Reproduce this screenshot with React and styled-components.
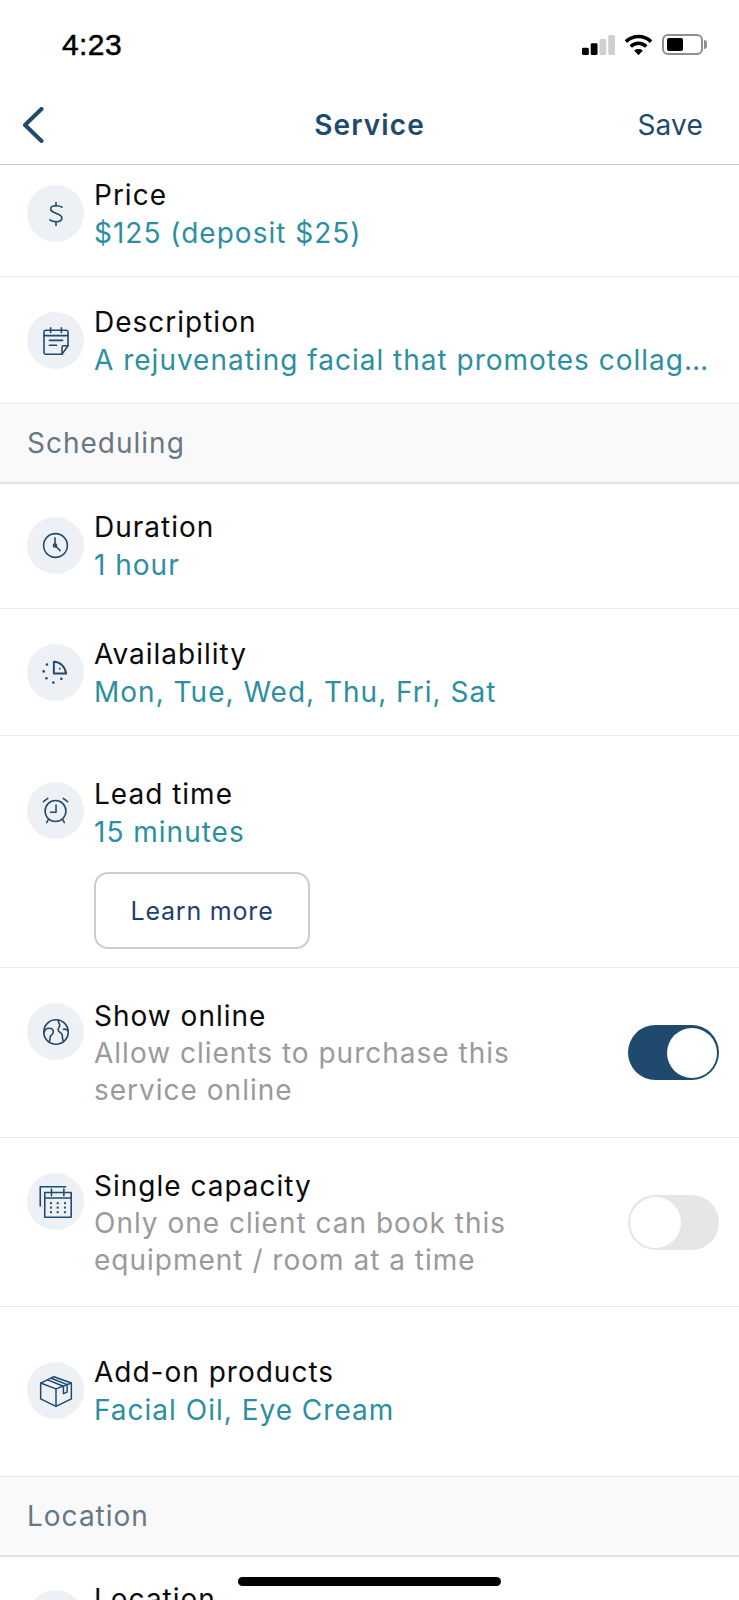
import styled, { createGlobalStyle } from "styled-components";

const GlobalStyle = createGlobalStyle`
  html, body {
    margin: 0;
    padding: 0;
    background: #fff;
  }
  * {
    box-sizing: border-box;
  }
`;

const iconProps = {
  width: 30,
  height: 30,
  viewBox: "0 0 30 30",
  fill: "none",
  stroke: "#1f4a6e",
  strokeWidth: 1.4,
  strokeLinecap: "round",
  strokeLinejoin: "round",
};

const DollarIcon = () => (
  <svg {...iconProps} strokeWidth="1.600">
    <path d="M21 8.200c-1.300-1-3.300-1.500-6-1.500-3.200 0-5.300 1.200-5.300 3.200 0 1.500 1.200 2.500 2.900 3.300l5.200 2.300c1.900.9 3.100 2 3.100 3.600 0 2.300-2.300 3.600-5.500 3.600-2.900 0-5-.6-6.400-1.900" />
    <path d="M15 3.500v3.200M15 22.700v3.800" />
  </svg>
);

const NoteIcon = () => (
  <svg {...iconProps} width={36} height={36} strokeWidth="1.300">
    <path d="M20 26H6.500A1.500 1.500 0 0 1 5 24.500V7.500A1.500 1.500 0 0 1 6.500 6h17A1.500 1.500 0 0 1 25 7.500V19z" />
    <path d="M20 26v-5.500a1.500 1.500 0 0 1 1.500-1.500H25" />
    <path d="M5 10.500h20M10.500 4v4M19.500 4v4M9.500 14.500h11M9.500 18.500h6" />
  </svg>
);

const ClockIcon = () => (
  <svg {...iconProps} width={31} height={31} strokeWidth="1.500">
    <circle cx="15" cy="15" r="11.500" />
    <path d="M14.500 7.500V15l5 5" />
    <circle cx="14.500" cy="15" r="1.500" />
  </svg>
);

const AvailabilityIcon = () => (
  <svg {...iconProps} width={32} height={32}>
    <path d="M13 4.500c6 0 10.500 4.500 11.500 11H13z" strokeWidth="1.800" />
    <circle cx="18.500" cy="11" r=".9" fill="#1f4a6e" stroke="none" />
    <g fill="#1f4a6e" stroke="none">
      <circle cx="6.500" cy="7" r="1.200" />
      <circle cx="3.500" cy="13.500" r="1.200" />
      <circle cx="6" cy="20" r="1.200" />
      <circle cx="12.500" cy="24" r="1.200" />
      <circle cx="20" cy="20.500" r="1.200" />
    </g>
  </svg>
);

const AlarmIcon = () => (
  <svg {...iconProps} width={33} height={33} strokeWidth="1.400">
    <circle cx="15" cy="15.500" r="9.500" />
    <path d="M15.500 10v6.500h-5M4 7 8 4M26 7l-4-3M8.500 23 7 26M21.500 23l1.500 3" />
  </svg>
);

const GlobeIcon = () => (
  <svg {...iconProps} width={32} height={32} strokeWidth="1.500">
    <circle cx="15" cy="15" r="11.500" />
    <path d="M3.500 16c1-3 2.800-4.500 5-4.500 2.500 0 4 1.500 4 3.500 0 1.800-1.500 2.500-2.500 3.500-.8.800-.3 2.500-1 5" />
    <path d="M17 4c.5 2.500 1.500 3.500 1.500 5 0 1.500-1.500 2-1.500 4 0 2 2.500 2.300 3.500 4 .8 1.500.3 3.500 1 6" />
    <path d="M26.500 14c-1.500-1.500-3-2-4.500-1.500" />
  </svg>
);

const CalendarIcon = () => (
  <svg {...iconProps} width={36} height={36} viewBox="0 0 32 32">
    <path d="M2 20V2.500h23" strokeLinecap="butt" />
    <path d="M6 7.500h23.500v22H6z" />
    <path d="M6 12.500h23.500M12 4.500v6M23 4.500v6" />
    <g fill="#1f4a6e" stroke="none">
      <circle cx="11.500" cy="17" r="1" />
      <circle cx="17.500" cy="17" r="1" />
      <circle cx="24" cy="17" r="1" />
      <circle cx="11.500" cy="21" r="1" />
      <circle cx="17.500" cy="21" r="1" />
      <circle cx="24" cy="21" r="1" />
      <circle cx="11.500" cy="25" r="1" />
      <circle cx="17.500" cy="25" r="1" />
      <circle cx="24" cy="25" r="1" />
    </g>
  </svg>
);

const BoxIcon = () => (
  <svg {...iconProps} width={36} height={36} viewBox="0 0 34 34">
    <path d="M17 15 2.500 9.500 15 3.500l16.500 6z" />
    <path d="M2.500 9.500v15L17 31.500V15M31.500 9.500v15L17 31.500" />
    <path d="M9 6.500 24 12.500v7l3.500-1.500v-7L12.500 5" />
  </svg>
);

const rows = {
  price: { title: "Price", value: "$125 (deposit $25)", icon: <DollarIcon /> },
  description: {
    title: "Description",
    value: "A rejuvenating facial that promotes collagen production and glow",
    icon: <NoteIcon />,
  },
  duration: { title: "Duration", value: "1 hour", icon: <ClockIcon /> },
  availability: {
    title: "Availability",
    value: "Mon, Tue, Wed, Thu, Fri, Sat",
    icon: <AvailabilityIcon />,
  },
  addons: {
    title: "Add-on products",
    value: "Facial Oil, Eye Cream",
    icon: <BoxIcon />,
  },
};

function InfoRow({ item, top, bottom }) {
  return (
    <Row $top={top} $bottom={bottom}>
      <IconCircle>{item.icon}</IconCircle>
      <RowText $shift={1}>
        <RowTitle>{item.title}</RowTitle>
        <RowValue>{item.value}</RowValue>
      </RowText>
    </Row>
  );
}

export default function App() {
  return (
    <Screen>
      <GlobalStyle />
      <StatusBar>
        <Clock>4:23</Clock>
        <StatusIcons>
          <svg width="33" height="20" viewBox="0 0 34 22" preserveAspectRatio="none">
            <rect x="0" y="14" width="7" height="8" rx="1.500" fill="#000" />
            <rect x="9" y="9" width="7" height="13" rx="1.500" fill="#000" />
            <rect x="18" y="4.500" width="7" height="17.500" rx="1.500" fill="#cfcfcf" />
            <rect x="27" y="0" width="7" height="22" rx="1.500" fill="#cfcfcf" />
          </svg>
          <svg width="29" height="22" viewBox="0 0 30 22" fill="none" stroke="#000" strokeWidth="3.600">
            <path d="M2 7.500c7.500-7 18.500-7 26 0" />
            <path d="M7 12.500c4.800-4.400 11.200-4.400 16 0" />
            <path d="M15 21.500l-4.500-4.800c2.700-2 6.300-2 9 0z" fill="#000" stroke="none" />
          </svg>
          <Battery>
            <BatteryFill />
          </Battery>
        </StatusIcons>
      </StatusBar>

      <NavBar>
        <BackButton>
          <svg width="22" height="36" viewBox="0 0 22 36" fill="none" stroke="#1f4a6e" strokeWidth="4" strokeLinecap="round" strokeLinejoin="round">
            <path d="M19.500 2 3 18l16.500 16" />
          </svg>
        </BackButton>
        <NavTitle>Service</NavTitle>
        <SaveButton>Save</SaveButton>
      </NavBar>

      <InfoRow item={rows.price} top={10} />
      <InfoRow item={rows.description} />

      <SectionHeader>Scheduling</SectionHeader>
      <InfoRow item={rows.duration} top={23} />
      <InfoRow item={rows.availability} />

      <Row $top={36} $bottom={21}>
        <IconCircle>
          <AlarmIcon />
        </IconCircle>
        <RowText $shift={3}>
          <RowTitle>Lead time</RowTitle>
          <RowValue>15 minutes</RowValue>
          <LearnMore>Learn more</LearnMore>
        </RowText>
      </Row>

      <Row $bottom={33}>
        <IconCircle>
          <GlobeIcon />
        </IconCircle>
        <RowText $shift={4}>
          <RowTitle>Show online</RowTitle>
          <RowHint>Allow clients to purchase this service online</RowHint>
        </RowText>
        <Toggle $on>
          <ToggleKnob $on />
        </Toggle>
      </Row>

      <Row $bottom={32}>
        <IconCircle>
          <CalendarIcon />
        </IconCircle>
        <RowText $shift={4}>
          <RowTitle>Single capacity</RowTitle>
          <RowHint>Only one client can book this equipment / room at a time</RowHint>
        </RowText>
        <Toggle>
          <ToggleKnob />
        </Toggle>
      </Row>

      <InfoRow item={rows.addons} top={45} bottom={48} />

      <SectionHeader>Location</SectionHeader>
      <Row $top={23}>
        <IconCircle />
        <RowText>
          <RowTitle>Location</RowTitle>
        </RowText>
      </Row>

      <HomeIndicator />
    </Screen>
  );
}

const Screen = styled.div`
  position: relative;
  width: 739px;
  height: 1600px;
  overflow: hidden;
  background: #fff;
  font-family: Inter, Roboto, "Liberation Sans", sans-serif;
`;

const StatusBar = styled.div`
  display: flex;
  align-items: center;
  justify-content: space-between;
  height: 89px;
  padding: 0 36px 0 62px;
`;

const Clock = styled.div`
  font-family: "Liberation Sans", Arial, sans-serif;
  font-size: 30px;
  letter-spacing: 0.4px;
  color: #000;
  -webkit-text-stroke: 0.5px #000;
`;

const StatusIcons = styled.div`
  display: flex;
  align-items: center;
  gap: 9px;
`;

const Battery = styled.div`
  position: relative;
  width: 41px;
  height: 21px;
  padding: 2px 3px;
  border: 2px solid #8e8e8e;
  border-radius: 6px;
  &::after {
    content: "";
    position: absolute;
    top: 4px;
    right: -6px;
    width: 3px;
    height: 9px;
    background: #8e8e8e;
    border-radius: 0 3px 3px 0;
  }
`;

const BatteryFill = styled.div`
  width: 16px;
  height: 100%;
  background: #000;
  border-radius: 2px;
`;

const NavBar = styled.div`
  display: grid;
  grid-template-columns: 1fr auto 1fr;
  align-items: center;
  height: 76px;
  padding: 0 36px 3px;
  border-bottom: 1px solid #c4c8ca;
`;

const BackButton = styled.div`
  display: flex;
  align-items: center;
  margin-left: -14px;
`;

const NavTitle = styled.div`
  font-size: 28px;
  font-weight: 600;
  color: #1f4a6e;
  letter-spacing: 1.1px;
`;

const SaveButton = styled.div`
  justify-self: end;
  font-size: 28px;
  letter-spacing: 0.2px;
  color: #1f4a6e;
`;

const Row = styled.div`
  display: flex;
  align-items: flex-start;
  padding: ${(p) => p.$top ?? 25}px 20px ${(p) => p.$bottom ?? 25}px 27px;
  border-bottom: 1px solid #e3eaec;
`;

const IconCircle = styled.div`
  flex: none;
  display: flex;
  align-items: center;
  justify-content: center;
  width: 57px;
  height: 57px;
  margin: 10px 10px 0 0;
  border-radius: 50%;
  background: #edf0f4;
`;

const RowText = styled.div`
  flex: 1;
  min-width: 0;
  margin-top: ${(p) => p.$shift ?? 0}px;
  margin-bottom: ${(p) => -(p.$shift ?? 0)}px;
  font-size: 28px;
  line-height: 38px;
  letter-spacing: 1px;
`;

const RowTitle = styled.div`
  color: #0b0b0b;
`;

const RowValue = styled.div`
  color: #2b8fa1;
  white-space: nowrap;
  overflow: hidden;
  text-overflow: ellipsis;
`;

const RowHint = styled.div`
  width: 440px;
  line-height: 36.500px;
  color: #9a9a9a;
`;

const LearnMore = styled.div`
  display: flex;
  align-items: center;
  justify-content: center;
  width: 216px;
  height: 77px;
  margin-top: 21px;
  border: 2px solid #cdcdcd;
  border-radius: 14px;
  font-size: 25px;
  letter-spacing: 0.8px;
  color: #1f3f6e;
`;

const Toggle = styled.div`
  flex: none;
  align-self: center;
  display: flex;
  justify-content: ${(p) => (p.$on ? "flex-end" : "flex-start")};
  align-items: center;
  width: 91px;
  height: 55px;
  margin-top: 8px;
  padding: 2px;
  border-radius: 28px;
  background: ${(p) => (p.$on ? "#1f4a6e" : "#e6e6e6")};
`;

const ToggleKnob = styled.div`
  width: ${(p) => (p.$on ? 50 : 51)}px;
  height: ${(p) => (p.$on ? 50 : 51)}px;
  border-radius: 50%;
  background: #fff;
`;

const SectionHeader = styled.div`
  display: flex;
  align-items: center;
  height: 80px;
  padding-left: 27px;
  background: #f9f9f9;
  border-bottom: 2px solid #dfe4e8;
  font-size: 28px;
  letter-spacing: 1px;
  color: #687785;
`;

const HomeIndicator = styled.div`
  position: absolute;
  left: 238px;
  bottom: 14px;
  width: 263px;
  height: 9px;
  border-radius: 5px;
  background: #000;
`;
